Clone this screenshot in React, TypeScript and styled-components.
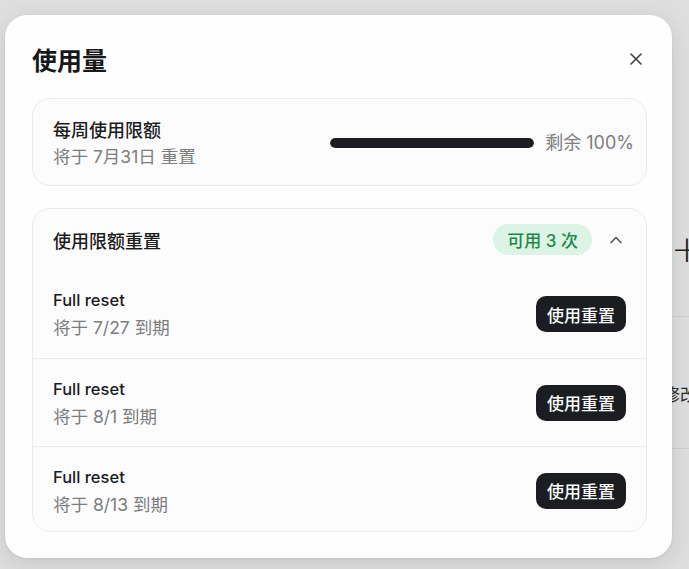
import styled, { createGlobalStyle } from "styled-components";

const GlobalStyle = createGlobalStyle`
  html, body {
    margin: 0;
    padding: 0;
    background: #dedede;
  }
  body {
    font-family: "Inter", "Noto Sans CJK SC", sans-serif;
    color: #1c1c1e;
    -webkit-font-smoothing: antialiased;
  }
`;

type Reset = { id: number; expires: string };

const resets: Reset[] = [
  { id: 1, expires: "7/27" },
  { id: 2, expires: "8/1" },
  { id: 3, expires: "8/13" },
];

export default function App() {
  const remaining = 100;

  return (
    <>
      <GlobalStyle />
      <Screen>
        <PageBehind>
          <Blank />
          <SideList>
            <ListTop>
              <PlusButton>+</PlusButton>
            </ListTop>
            <ListRow>修改</ListRow>
            <ListRow />
          </SideList>
        </PageBehind>

        <Dialog role="dialog" aria-label="使用量">
          <DialogHeader>
            <Title>使用量</Title>
            <CloseButton aria-label="关闭">
              <svg width="12" height="12" viewBox="0 0 12 12">
                <path d="M1 1L11 11M11 1L1 11" stroke="#3a3a3c" strokeWidth="1.5" strokeLinecap="round" />
              </svg>
            </CloseButton>
          </DialogHeader>

          <Card>
            <LimitRow>
              <TextBlock>
                <Label>每周使用限额</Label>
                <Sub>将于 7月31日 重置</Sub>
              </TextBlock>
              <Meter>
                <Track>
                  <Fill style={{ width: `${remaining}%` }} />
                </Track>
                <MeterText>剩余 {remaining}%</MeterText>
              </Meter>
            </LimitRow>
          </Card>

          <Card>
            <SectionHeader>
              <Label>使用限额重置</Label>
              <HeaderSide>
                <Pill>可用 {resets.length} 次</Pill>
                <Chevron aria-label="收起">
                  <svg width="14" height="10" viewBox="0 0 14 10">
                    <path d="M2 7.5L7 2.5L12 7.5" fill="none" stroke="#55575b" strokeWidth="1.6" strokeLinecap="round" strokeLinejoin="round" />
                  </svg>
                </Chevron>
              </HeaderSide>
            </SectionHeader>
            {resets.map((r) => (
              <ResetRow key={r.id}>
                <TextBlock>
                  <ResetName>Full reset</ResetName>
                  <Sub>将于 {r.expires} 到期</Sub>
                </TextBlock>
                <UseButton>使用重置</UseButton>
              </ResetRow>
            ))}
          </Card>
        </Dialog>
      </Screen>
    </>
  );
}

const Screen = styled.div`
  position: relative;
  width: 689px;
  height: 569px;
  overflow: hidden;
  background: #dedede;
`;

const PageBehind = styled.div`
  display: grid;
  grid-template-columns: 673px 200px;
  height: 100%;
`;

const Blank = styled.div``;

const SideList = styled.div`
  display: flex;
  flex-direction: column;
  padding-top: 226px;
`;

const ListTop = styled.div`
  height: 90px;
  border-bottom: 1px solid #cfcfcf;
`;

const PlusButton = styled.span`
  display: block;
  margin-top: 3px;
  margin-left: -2px;
  font-family: "DejaVu Sans", sans-serif;
  font-weight: 200;
  font-size: 38px;
  line-height: 40px;
  color: #1f1f1f;
`;

const ListRow = styled.div`
  height: 132px;
  box-sizing: border-box;
  padding-top: 22px;
  border-bottom: 1px solid #cfcfcf;
  display: flex;
  align-items: center;
  margin-left: -10px;
  font-family: "Noto Sans CJK SC", sans-serif;
  font-size: 17px;
  color: #2a2a2a;

  &:last-child {
    border-bottom: none;
  }
`;

const Dialog = styled.section`
  position: absolute;
  left: 5px;
  top: 15px;
  width: 667px;
  height: 543px;
  box-sizing: border-box;
  padding: 27px 25px 26px 27px;
  background: #fefefe;
  border-radius: 22px;
  box-shadow: 0 6px 24px rgba(0, 0, 0, 0.1), 0 1px 3px rgba(0, 0, 0, 0.06);
  display: flex;
  flex-direction: column;
  gap: 22px;
`;

const DialogHeader = styled.header`
  display: flex;
  align-items: center;
  justify-content: space-between;
  height: 34px;
`;

const Title = styled.h1`
  margin: 0;
  font-family: "Noto Sans CJK SC", sans-serif;
  font-size: 25px;
  font-weight: 700;
  line-height: 34px;
  color: #18181a;
`;

const CloseButton = styled.button`
  display: flex;
  align-items: center;
  justify-content: center;
  width: 24px;
  height: 24px;
  margin-right: -1px;
  padding: 0;
  border: none;
  background: transparent;
  cursor: pointer;
`;

const Card = styled.div`
  border: 1px solid #ebebeb;
  border-radius: 18px;
  background: #fcfcfc;
  overflow: hidden;
`;

const LimitRow = styled.div`
  display: flex;
  align-items: center;
  justify-content: space-between;
  height: 87px;
  padding: 0 12px 0 20px;
`;

const TextBlock = styled.div`
  display: flex;
  flex-direction: column;
  gap: 6px;
`;

const Label = styled.div`
  font-family: "Noto Sans CJK SC", sans-serif;
  font-size: 18px;
  font-weight: 500;
  line-height: 22px;
  color: #1c1c1e;
`;

const ResetName = styled.div`
  font-size: 16.5px;
  font-weight: 500;
  line-height: 22px;
  color: #1c1c1e;
`;

const Sub = styled.div`
  font-size: 17.5px;
  line-height: 22px;
  color: #7d7d80;
`;

const Meter = styled.div`
  display: flex;
  align-items: center;
  gap: 11px;
`;

const Track = styled.div`
  width: 204px;
  height: 10px;
  border-radius: 5px;
  background: #e4e4e6;
  overflow: hidden;
`;

const Fill = styled.div`
  height: 100%;
  border-radius: 5px;
  background: #1b1d20;
`;

const MeterText = styled.span`
  font-size: 18px;
  line-height: 22px;
  color: #7d7d80;
`;

const SectionHeader = styled.div`
  display: flex;
  align-items: center;
  justify-content: space-between;
  height: 61px;
  padding: 0 18px 0 20px;
`;

const HeaderSide = styled.div`
  display: flex;
  align-items: center;
  gap: 12px;
`;

const Pill = styled.span`
  display: inline-flex;
  align-items: center;
  height: 31px;
  padding: 0 14px;
  border-radius: 16px;
  background: #dbf4e4;
  color: #23864a;
  font-size: 17px;
  font-weight: 500;
`;

const Chevron = styled.button`
  display: flex;
  align-items: center;
  justify-content: center;
  width: 24px;
  height: 24px;
  padding: 0;
  border: none;
  background: transparent;
`;

const ResetRow = styled.div`
  display: flex;
  align-items: center;
  justify-content: space-between;
  height: 87px;
  padding: 0 20px;
  border-top: 1px solid #ececec;

  &:nth-child(2) {
    border-top: none;
    height: 88px;
  }
`;

const UseButton = styled.button`
  height: 36px;
  padding: 0 11px;
  border: none;
  border-radius: 10px;
  background: #1b1d20;
  color: #ffffff;
  font-family: "Noto Sans CJK SC", sans-serif;
  font-size: 17px;
  font-weight: 500;
  cursor: pointer;
`;
